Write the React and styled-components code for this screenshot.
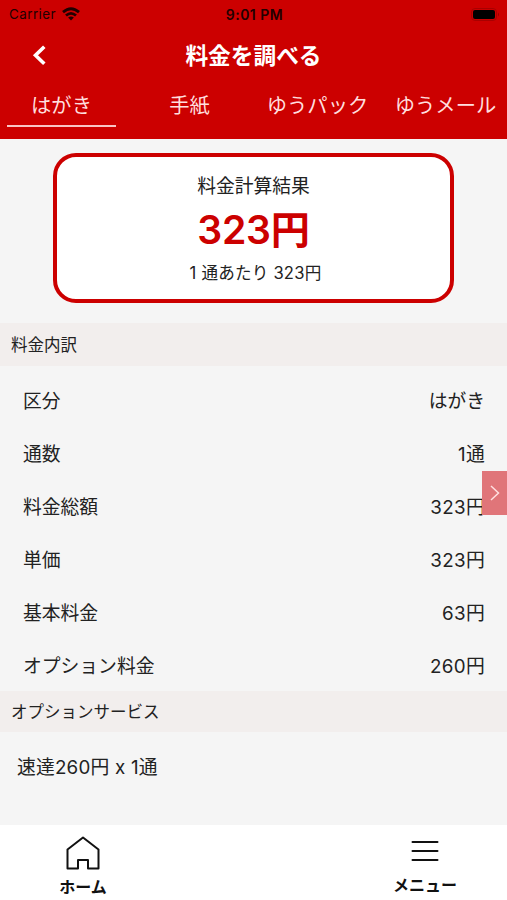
import styled, { createGlobalStyle } from "styled-components";

const GlobalStyle = createGlobalStyle`
  * {
    box-sizing: border-box;
  }

  body {
    margin: 0;
    background-color: #f5f5f5;
    font-family: Inter, "Noto Sans CJK JP", sans-serif;
    color: #222222;
  }

  p,
  h1,
  h2 {
    margin: 0;
  }
`;

const Screen = styled.div`
  position: relative;
  width: 507px;
  height: 900px;
  display: flex;
  flex-direction: column;
  overflow: hidden;
  background-color: #f5f5f5;
`;

const Header = styled.header`
  height: 139px;
  flex-shrink: 0;
  background-color: #cc0000;
  color: white;
`;

const StatusBar = styled.div`
  height: 28px;
  padding: 0 7px 0 9px;
  display: grid;
  grid-template-columns: 1fr auto 1fr;
  align-items: center;
  color: #210000;
`;

const Carrier = styled.div`
  display: flex;
  align-items: center;
  gap: 6px;
  font-size: 13.4px;
  letter-spacing: 0.45px;
`;

const Clock = styled.p`
  font-size: 14px;
  font-weight: 600;
  letter-spacing: 0.5px;
`;

const Battery = styled.svg`
  justify-self: end;
`;

const TitleBar = styled.div`
  height: 55px;
  padding: 1px 31px 0;
  display: grid;
  grid-template-columns: 1fr auto 1fr;
  align-items: center;
`;

const Title = styled.h1`
  font-weight: 700;
  font-size: 22.7px;
  line-height: 30px;
`;

const Tabs = styled.nav`
  width: 512px;
  height: 45px;
  margin-left: -3px;
  display: flex;
`;

const Tab = styled.div`
  width: 128px;
  display: flex;
  justify-content: center;
  padding: 0 9px 0 10px;
  font-weight: 400;
  font-size: 20.3px;
  line-height: 45px;
  white-space: nowrap;
  color: #ffdede;

  &::after {
    content: "";
    display: ${({ $active }) => ($active ? "block" : "none")};
    width: 109px;
    height: 2px;
    margin-top: 42px;
    margin-left: -85px;
    margin-right: -24px;
    background-color: #f9c4c4;
  }
`;

const ResultCard = styled.section`
  width: 401px;
  height: 150px;
  margin: 14px 0 20px 53px;
  flex-shrink: 0;
  border: 4px solid #cc0000;
  border-radius: 23px;
  background-color: white;
  display: flex;
  flex-direction: column;
  align-items: center;
  padding-top: 15px;
`;

const ResultTitle = styled.p`
  font-size: 18.8px;
  line-height: 29px;
`;

const Total = styled.p`
  font-weight: 600;
  font-size: 39.2px;
  line-height: 58px;
  letter-spacing: -0.2px;
  color: #cc0000;
`;

const PerItem = styled.p`
  font-size: 16.6px;
  line-height: 28px;
  letter-spacing: 0.2px;
  padding-left: 4px;
`;

const SectionTitle = styled.h2`
  height: ${({ $height }) => $height}px;
  flex-shrink: 0;
  padding-left: 11px;
  background-color: #f2eeed;
  font-weight: 400;
  font-size: 16.5px;
  line-height: ${({ $height }) => $height + 2}px;
`;

const Rows = styled.div`
  padding: 7px 22px 0 23px;
  height: 325px;
  flex-shrink: 0;
`;

const Row = styled.div`
  height: 53px;
  display: flex;
  justify-content: space-between;
  align-items: center;
  font-size: 18.8px;
`;

const Value = styled.span`
  letter-spacing: ${({ $numeric }) => ($numeric ? "0.3px" : "0")};
`;

const Option = styled.p`
  padding-left: 17px;
  height: 93px;
  font-size: 18.8px;
  line-height: 71px;
  letter-spacing: 0.2px;
`;

const SideHandle = styled.button`
  position: absolute;
  top: 471px;
  right: 0;
  width: 25px;
  height: 44px;
  padding: 0;
  border: none;
  background-color: #e07579;
  display: flex;
  justify-content: center;
  align-items: center;
`;

const BottomNav = styled.nav`
  height: 75px;
  flex-shrink: 0;
  background-color: white;
  display: flex;
  justify-content: space-between;
  padding: 0 40px 0 41px;
`;

const NavItem = styled.div`
  width: 84px;
  display: flex;
  flex-direction: column;
  align-items: center;
  padding-top: ${({ $top }) => $top}px;
  gap: ${({ $gap }) => $gap}px;
  font-weight: 700;
  font-size: 16px;
  line-height: 24px;
  white-space: nowrap;
  color: #111111;
`;

const tabs = ["はがき", "手紙", "ゆうパック", "ゆうメール"];

const rows = [
  { label: "区分", value: "はがき" },
  { label: "通数", value: "1通", numeric: true },
  { label: "料金総額", value: "323円", numeric: true },
  { label: "単価", value: "323円", numeric: true },
  { label: "基本料金", value: "63円", numeric: true },
  { label: "オプション料金", value: "260円", numeric: true },
];

function App() {
  return (
    <>
      <GlobalStyle />
      <Screen>
        <Header>
          <StatusBar>
            <Carrier>
              Carrier
              <svg width="18" height="14" viewBox="0 0 18 14" fill="none" stroke="#210000" strokeWidth="2.8">
                <path d="M1 5.1 Q9 -1.7 17 5.1" />
                <path d="M4 8.5 Q9 4.2 14 8.5" />
                <path d="M9 13.5 L6.1 10.6 Q9 8.2 11.9 10.6 Z" fill="#210000" stroke="none" />
              </svg>
            </Carrier>
            <Clock>9:01 PM</Clock>
            <Battery width="29" height="13" viewBox="0 0 29 13">
              <rect x="0.5" y="0.5" width="25" height="12" rx="3.5" fill="none" stroke="#a80000" />
              <rect x="2" y="2" width="22" height="9" rx="2" fill="#000000" />
              <path d="M27 4.5 Q29 6.5 27 8.5 Z" fill="#960000" />
            </Battery>
          </StatusBar>
          <TitleBar>
            <svg width="17" height="22" viewBox="0 0 17 22" fill="none" stroke="white" strokeWidth="3.6">
              <path d="M13.3 1.7 L4.5 10.2 L13.3 18.7" />
            </svg>
            <Title>料金を調べる</Title>
          </TitleBar>
          <Tabs>
            {tabs.map((tab, i) => (
              <Tab key={tab} $active={i === 0}>
                {tab}
              </Tab>
            ))}
          </Tabs>
        </Header>

        <ResultCard>
          <ResultTitle>料金計算結果</ResultTitle>
          <Total>323円</Total>
          <PerItem>1 通あたり 323円</PerItem>
        </ResultCard>

        <SectionTitle $height={43}>料金内訳</SectionTitle>
        <Rows>
          {rows.map(({ label, value, numeric }) => (
            <Row key={label}>
              <span>{label}</span>
              <Value $numeric={numeric}>{value}</Value>
            </Row>
          ))}
        </Rows>

        <SectionTitle $height={41}>オプションサービス</SectionTitle>
        <Option>速達260円 x 1通</Option>

        <BottomNav>
          <NavItem $top={11} $gap={4}>
            <svg width="36" height="35" viewBox="0 0 36 35" fill="none" stroke="#111111" strokeWidth="2" strokeLinejoin="round">
              <path d="M18 1.5 L33.5 13.5 V32.5 H23 V24 H13 V32.5 H2.5 V13.5 Z" />
            </svg>
            ホーム
          </NavItem>
          <NavItem $top={14} $gap={10}>
            <svg width="28" height="24" viewBox="0 0 28 24" stroke="#111111" strokeWidth="2" strokeLinecap="round">
              <path d="M1.5 3 H26.5 M1.5 12 H26.5 M1.5 21 H26.5" />
            </svg>
            メニュー
          </NavItem>
        </BottomNav>

        <SideHandle>
          <svg width="12" height="18" viewBox="0 0 12 18" fill="none" stroke="#ffe0e0" strokeWidth="1.5">
            <path d="M2 2 L9.5 9 L2 16" />
          </svg>
        </SideHandle>
      </Screen>
    </>
  );
}

export default App;
